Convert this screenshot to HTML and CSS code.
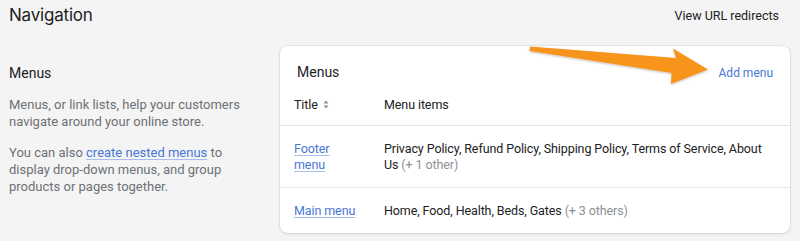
FILE: index.html
```html
<!DOCTYPE html>
<html lang="en">
<head>
    <meta charset="UTF-8">
    <meta name="viewport" content="width=device-width, initial-scale=1.0">
    <title>Navigation</title>
    <link rel="stylesheet" href="styles.css">
</head>
<body>
    <div id="page">
        <div class="page-header">
            <h1 class="page-title">Navigation</h1>
            <a class="plain-action" href="#">View URL redirects</a>
        </div>
        <div class="layout">
            <div class="annotation">
                <h2 class="annotation-title">Menus</h2>
                <p>Menus, or link lists, help your customers navigate around your online store.</p>
                <p>You can also <a href="#" class="link">create nested menus</a> to display drop-down menus, and group products or pages together.</p>
            </div>
            <div class="card">
                <div class="card-header">
                    <h2 class="card-title">Menus</h2>
                    <a href="#" class="card-action">Add menu</a>
                </div>
                <table class="menu-table">
                    <thead>
                        <tr>
                            <th class="col-title">Title <svg class="sort-icon" width="6" height="9" viewBox="0 0 6 9"><path d="M3 0.5L5.5 3.5H0.5Z M3 8.5L0.5 5.5H5.5Z" fill="#8c9196"/></svg></th>
                            <th>Menu items</th>
                        </tr>
                    </thead>
                    <tbody>
                        <tr>
                            <td class="col-title"><a href="#" class="link">Footer menu</a></td>
                            <td>Privacy Policy, Refund Policy, Shipping Policy, Terms of Service, About Us <span class="muted">(+ 1 other)</span></td>
                        </tr>
                        <tr>
                            <td class="col-title"><a href="#" class="link">Main menu</a></td>
                            <td>Home, Food, Health, Beds, Gates <span class="muted">(+ 3 others)</span></td>
                        </tr>
                    </tbody>
                </table>
            </div>
        </div>
        <!-- annotation arrow drawn over the screenshot -->
        <svg class="arrow" width="800" height="241" viewBox="0 0 800 241">
            <defs>
                <filter id="arrow-shadow" x="-10%" y="-50%" width="120%" height="200%">
                    <feDropShadow dx="0" dy="1" stdDeviation="1" flood-color="#000" flood-opacity="0.25"/>
                </filter>
            </defs>
            <path d="M530 46.5 L676 58 L673 48.5 L708 69.5 L671 84 L671.5 73 L529.5 51 Z" fill="#f7941d" filter="url(#arrow-shadow)"/>
        </svg>
    </div>
</body>
</html>
```

FILE: styles.css
```css
body {
    margin: 0;
    background-color: #f4f4f4;
    font-family: Roboto, "Liberation Sans", sans-serif;
    color: #202223;
    font-size: 13px;
}
#page {
    position: relative;
    height: 241px;
    overflow: hidden;
}
.page-header {
    display: flex;
    justify-content: space-between;
    align-items: center;
    padding: 3px 21px 0 9px;
    height: 24px;
}
.page-title {
    margin: 0;
    font-family: Inter, sans-serif;
    font-size: 17px;
    font-weight: 400;
    letter-spacing: -0.2px;
}
.plain-action {
    color: #202223;
    text-decoration: none;
    font-size: 12.5px;
}
.layout {
    display: flex;
    padding: 19px 10px 0 9px;
}
.annotation {
    width: 250px;
    margin-right: 21px;
    padding-top: 19px;
}
.annotation-title {
    margin: 0 0 14px;
    font-size: 14px;
    font-weight: 400;
    line-height: 17px;
}
.annotation p {
    margin: 0 0 14px;
    color: #6d7175;
    font-size: 13px;
    line-height: 17px;
}
.link {
    color: #4776d6;
    text-decoration: underline;
    text-decoration-color: #a9bdea;
    text-underline-offset: 2px;
}
.card {
    flex: 1;
    background-color: #fff;
    border-radius: 8px;
    box-shadow: 0 0 0 1px rgba(63, 63, 68, 0.05), 0 1px 3px rgba(63, 63, 68, 0.15);
    overflow: hidden;
}
.card-header {
    display: flex;
    justify-content: space-between;
    align-items: center;
    padding: 18px 17px 0 17px;
}
.card-title {
    margin: 0;
    font-size: 14px;
    font-weight: 400;
    line-height: 17px;
}
.card-action {
    color: #4776d6;
    text-decoration: none;
    font-size: 12px;
}
.menu-table {
    width: 100%;
    border-collapse: collapse;
    margin-top: 9px;
    font-size: 12.5px;
    letter-spacing: -0.1px;
}
.menu-table th {
    text-align: left;
    font-weight: 400;
    padding: 6px 14px 12px 0;
    line-height: 17px;
    border-bottom: 1px solid #e4e5e7;
}
.menu-table td {
    padding: 15px 14px 14px 0;
    line-height: 16px;
    vertical-align: top;
}
.menu-table tbody tr + tr td {
    border-top: 1px solid #e4e5e7;
}
.menu-table .col-title {
    width: 65px;
    padding-left: 14px;
    padding-right: 25px;
}
.sort-icon {
    margin-left: 2px;
    vertical-align: 0;
}
.muted {
    color: #8c9196;
}
.arrow {
    position: absolute;
    top: 0;
    left: 0;
    pointer-events: none;
}
```
